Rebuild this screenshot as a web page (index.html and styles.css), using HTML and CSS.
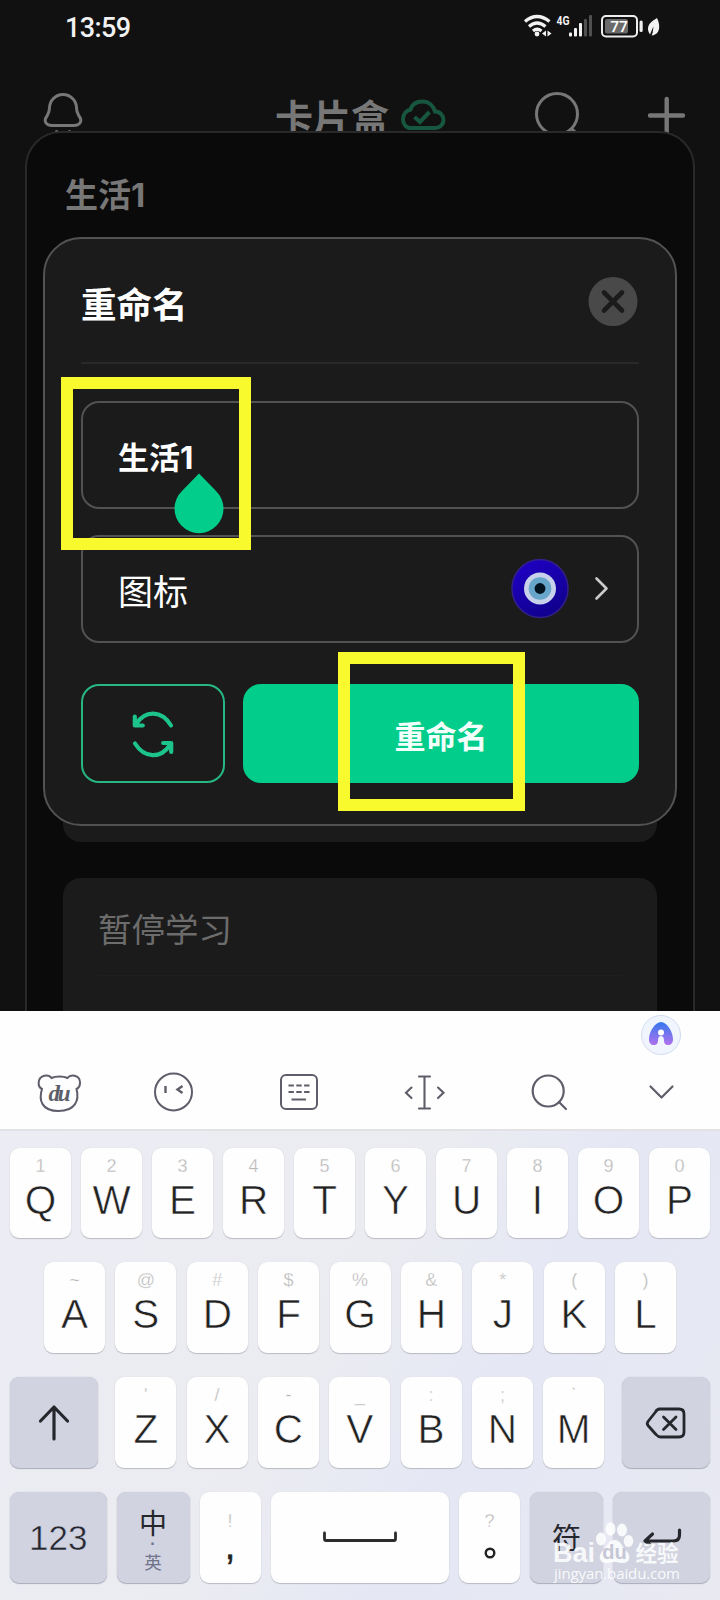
FILE: index.html
```html
<!DOCTYPE html>
<html lang="zh-CN">
<head>
<meta charset="utf-8">
<title>卡片盒</title>
<link rel="stylesheet" href="styles.css">
</head>
<body>
<div class="screen">
  <main class="app">
    <div class="status">
      <span class="time">13:59</span>
      <svg class="status-icons" viewBox="520 10 144 32" width="144" height="32">
        <g fill="none" stroke="#f2f2f2" stroke-width="3.2">
          <path d="M525 21.5Q537 11.500 549.500 21.500M529 26.500Q537 19.500 545.500 26.500M533 31Q537 27.500 541.500 31"/>
        </g>
        <circle cx="537" cy="34" r="2.4" fill="#f2f2f2"/>
        <path d="M546 30.500v6l-4-3zM547.500 30.500v6l4-3z" fill="#f2f2f2"/>
        <text class="net" x="556.500" y="24.500" textLength="13" lengthAdjust="spacingAndGlyphs">4G</text>
        <g fill="#f2f2f2"><rect x="569" y="32.500" width="3" height="4" rx="1"/><rect x="574" y="28" width="3" height="8.500" rx="1"/><rect x="579" y="23" width="3" height="13.500" rx="1"/></g>
        <g fill="#505050"><rect x="584" y="19" width="3" height="17.500" rx="1"/><rect x="589" y="15" width="3" height="21.500" rx="1"/></g>
        <rect x="602" y="16" width="35" height="20.500" rx="4" fill="none" stroke="#eee" stroke-width="2"/>
        <rect x="605" y="19" width="23" height="14.500" rx="2" fill="#6b6b6b"/>
        <text class="pct" x="619" y="32" text-anchor="middle">77</text>
        <rect x="639.500" y="20.500" width="3.200" height="11.500" rx="1.500" fill="#eee"/>
        <path d="M657 18c-5 3-9 6-9 11 0 2 1 4 2 5.500l2.500-6 1-2-.8 6-1 3c5-.5 7.500-4 7.500-9 0-3-1-6-2.200-8.500z" fill="#f2f2f2"/>
      </svg>
    </div>
    <header class="topbar">
      <svg viewBox="43 90 40 46" width="40" height="46" fill="none" stroke="#777" stroke-width="3">
        <path d="M49.500 108a13.500 13.500 0 0 1 27 0c0 4 1 5.500 2.500 8 4 5 1 9.500-5 9.500H52c-6 0-9-4.500-5-9.500 1.500-2.500 2.500-4 2.500-8z"/>
        <path d="M56.500 131.500q6.500 6 13 0" stroke-linecap="round"/>
      </svg>
      <h1 class="app-title">卡片盒</h1>
      <svg class="cloud" viewBox="399 90 48 46" width="48" height="46" fill="none" stroke="#17573f" stroke-width="4">
        <path d="M411 128c-5 0-8-4-8-9 0-5 3.500-8.500 7.500-9.500 1.500-5 6-8 12-8 6.500 0 11 4.500 12.500 10 5 0 8.500 4 8.500 8.500 0 4.500-3.500 8-8 8z"/>
        <path d="M414.500 117l5.500 5 9.500-10"/>
      </svg>
      <svg class="search" viewBox="533 90 48 46" width="48" height="46" fill="none" stroke="#777" stroke-width="3">
        <circle cx="557" cy="114" r="20.500"/><path d="M571 128l7 7"/>
      </svg>
      <svg class="plus" viewBox="646 90 42 46" width="42" height="46" stroke="#777" stroke-width="4.400" stroke-linecap="round">
        <path d="M650 115.500h33M666.700 99v36"/>
      </svg>
    </header>

    <section class="sheet">
      <h2 class="sheet-title">生活<span class="digit">1</span></h2>
      <div class="group group-first"></div>
      <div class="group group-next">
        <p class="group-item">暂停学习</p>
      </div>
    </section>

    <section class="dialog">
      <div class="dialog-head">
        <h2 class="dialog-title">重命名</h2>
        <svg viewBox="0 0 50 50" width="50" height="50">
          <circle cx="25" cy="25.500" r="24.500" fill="#494949"/>
          <path d="M16 16.500l18 18M34 16.500L16 34.500" stroke="#1b1b1b" stroke-width="4.600" stroke-linecap="round"/>
        </svg>
      </div>
      <div class="field">
        <span class="field-value">生活<span class="digit">1</span></span>
        <svg class="handle" viewBox="0 0 50 60" width="50" height="60"><path d="M25 .5L42 18A24.500 24.500 0 1 1 8 18z" fill="#03cd8a"/></svg>
      </div>
      <div class="field icon-field">
        <span class="field-label">图标</span>
        <svg viewBox="0 0 60 60" width="60" height="60">
          <defs><linearGradient id="eye" x1="0" y1="0" x2=".5" y2="1"><stop offset="0" stop-color="#2000ca"/><stop offset="1" stop-color="#11008f"/></linearGradient></defs>
          <ellipse cx="30" cy="29.500" rx="28" ry="29" fill="url(#eye)" stroke="#342184" stroke-width="1.500"/>
          <circle cx="30" cy="29.500" r="16" fill="#c7d1ea"/><circle cx="30" cy="29.500" r="11.300" fill="#67a5ca"/><circle cx="30" cy="29.500" r="5.400" fill="#02131f"/>
        </svg>
        <svg class="chev" viewBox="0 0 16 26" width="16" height="26"><path d="M2.500 2.500l10 10-10 10" fill="none" stroke="#ccc" stroke-width="2.600" stroke-linecap="round" stroke-linejoin="round"/></svg>
      </div>
      <div class="actions">
        <button class="btn btn-outline">
          <svg viewBox="130 708 46 50" width="46" height="50" fill="none" stroke="#1cc48b" stroke-width="4.200" stroke-linecap="round" stroke-linejoin="round">
            <path d="M171 724.500C161.500 709 145.500 709 136 723M134.800 715.500v9h8"/>
            <path d="M135 742.500C144.500 757.500 160.500 758 170 744M171.200 751v-9h-8"/>
          </svg>
        </button>
        <button class="btn btn-primary">重命名</button>
      </div>
    </section>
    <div class="mark mark-input"></div>
    <div class="mark mark-submit"></div>
  </main>

  <section class="ime">
    <div class="candidates">
      <svg viewBox="0 0 42 42" width="42" height="42">
        <defs><linearGradient id="ai" x1="0" y1="0" x2="0" y2="1"><stop offset="0" stop-color="#3478ee"/><stop offset="1" stop-color="#b071ee"/></linearGradient></defs>
        <circle cx="21" cy="21" r="19.500" fill="#f0f4fd" stroke="#d3dcf0" stroke-width="1"/>
        <path d="M21 8c-6 0-12 10-12 17 0 4 2 6 5 6 3 0 4-2 4-4.500 0-3 1-4.500 3-4.500s3 1.500 3 4.500c0 2.500 1 4.500 4 4.500 3 0 5-2 5-6 0-7-6-17-12-17z" fill="url(#ai)"/>
        <circle cx="21" cy="18.500" r="3" fill="#fff"/>
      </svg>
    </div>
    <div class="tools">
      <svg class="tool-home" viewBox="36 1070 46 46" width="46" height="46" fill="none" stroke="#5d5e69" stroke-width="2">
        <path d="M51.500 1078c4-2 12-2 16 0 3-4 12-3.500 12.500 4 .2 3.500-1.500 6-3.500 7 3 11-1 22-18 22s-20-11-16.500-22c-2-1-3.700-3.500-3.300-7 .8-7.500 10-8 12.800-4z"/>
        <text class="du" x="59.500" y="1101" text-anchor="middle" textLength="22">du</text>
      </svg>
      <svg class="tool-emoji" viewBox="152 1070 42 46" width="42" height="46" fill="none" stroke="#5d5e69" stroke-width="2">
        <circle cx="173.500" cy="1092" r="18.500"/><path d="M165.500 1086v7M182.500 1086l-5 3.500 5 3.500" stroke-width="2.400"/>
      </svg>
      <svg class="tool-layout" viewBox="278 1070 42 46" width="42" height="46" fill="none" stroke="#5d5e69" stroke-width="2">
        <rect x="281" y="1075" width="36" height="34" rx="5"/><path d="M288.500 1085.500h21M288.500 1092h21" stroke-dasharray="5.400 2.400"/><path d="M291.500 1099.500h14.500"/>
      </svg>
      <svg class="tool-cursor" viewBox="402 1070 46 46" width="46" height="46" fill="none" stroke="#5d5e69" stroke-width="2.100" stroke-linecap="round">
        <path d="M419 1076.500h11M419 1108.500h11M424.500 1077v31M411.500 1087.500l-5.500 5.300 5.500 5.300M438 1087.500l5.500 5.300-5.500 5.300"/>
      </svg>
      <svg class="tool-search" viewBox="528 1070 42 46" width="42" height="46" fill="none" stroke="#5d5e69" stroke-width="2.200" stroke-linecap="round">
        <circle cx="548.200" cy="1091" r="15.500"/><path d="M559 1102l7 7"/>
      </svg>
      <svg viewBox="646 1070 30 46" width="30" height="46" fill="none" stroke="#5d5e69" stroke-width="2.200" stroke-linecap="round" stroke-linejoin="round">
        <path d="M650.500 1086.500l11 11 11-11"/>
      </svg>
    </div>

    <div class="keys">
      <div class="row row-1">
        <div class="key"><i>1</i><b>Q</b></div><div class="key"><i>2</i><b>W</b></div><div class="key"><i>3</i><b>E</b></div><div class="key"><i>4</i><b>R</b></div><div class="key"><i>5</i><b>T</b></div><div class="key"><i>6</i><b>Y</b></div><div class="key"><i>7</i><b>U</b></div><div class="key"><i>8</i><b>I</b></div><div class="key"><i>9</i><b>O</b></div><div class="key"><i>0</i><b>P</b></div>
      </div>
      <div class="row row-2">
        <div class="key"><i>~</i><b>A</b></div><div class="key"><i>@</i><b>S</b></div><div class="key"><i>#</i><b>D</b></div><div class="key"><i>$</i><b>F</b></div><div class="key"><i>%</i><b>G</b></div><div class="key"><i>&amp;</i><b>H</b></div><div class="key"><i>*</i><b>J</b></div><div class="key"><i>(</i><b>K</b></div><div class="key"><i>)</i><b>L</b></div>
      </div>
      <div class="row row-3">
        <div class="key fn wide">
          <svg viewBox="0 0 34 38" width="34" height="38" fill="none" stroke="#26272d" stroke-width="3.200" stroke-linecap="round" stroke-linejoin="round"><path d="M17 35V3M3.500 17L17 3l13.500 14"/></svg>
        </div>
        <div class="letters">
          <div class="key"><i>'</i><b>Z</b></div><div class="key"><i>/</i><b>X</b></div><div class="key"><i>-</i><b>C</b></div><div class="key"><i>_</i><b>V</b></div><div class="key"><i>:</i><b>B</b></div><div class="key"><i>;</i><b>N</b></div><div class="key"><i>ˋ</i><b>M</b></div>
        </div>
        <div class="key fn wide">
          <svg viewBox="0 0 42 32" width="42" height="32" fill="none" stroke="#26272d" stroke-width="2.800" stroke-linecap="round" stroke-linejoin="round"><path d="M14 2h20q5 0 5 5v18q0 5-5 5H16q-3 0-5-2.500L3 18.500q-1.500-2 0-4L10.500 5Q12 2 15 2M18.500 10l12.500 12.500M31 10L18.500 22.500"/></svg>
        </div>
      </div>
      <div class="row row-4">
        <div class="key fn num">123</div>
        <div class="key fn lang"><span>中</span><em>·</em><small>英</small></div>
        <div class="key punct"><i>!</i><b>,</b></div>
        <div class="key space"><svg viewBox="0 0 76 12" width="76" height="12" fill="none" stroke="#2b2c2e" stroke-width="2.800" stroke-linecap="round" stroke-linejoin="round"><path d="M2.500 2v6q0 1.500 1.500 1.500h68q1.500 0 1.500-1.500V2"/></svg></div>
        <div class="key punct"><i>?</i><svg viewBox="0 0 12 12" width="12" height="12"><circle cx="6" cy="6" r="4.300" fill="none" stroke="#222" stroke-width="2.400"/></svg></div>
        <div class="key fn sym">符</div>
        <div class="key fn enter"><svg viewBox="0 0 40 20" width="40" height="20" fill="none" stroke="#26272d" stroke-width="3.200" stroke-linecap="round" stroke-linejoin="round"><path d="M37.500 3v5q0 6-6 6H3M10.500 7L3 14l5 3.500"/></svg></div>
      </div>
    </div>
  </section>

  <div class="watermark">
    <svg viewBox="552 1518 130 48" width="130" height="48">
      <g fill="#fff" fill-opacity=".85">
        <ellipse cx="601" cy="1539" rx="5" ry="6.500"/><ellipse cx="610.500" cy="1529" rx="5" ry="6.700"/><ellipse cx="622" cy="1530" rx="5" ry="6.500"/><ellipse cx="628.500" cy="1541" rx="4.800" ry="6"/>
        <path d="M614.500 1540c6 0 7 6 11 10 6 5 5 13-3 13-5 0-5-1-8-1s-4 1-8 1c-8 0-9-8-3-13 4-4 5-10 11-10z"/>
        <text class="wm-bai" x="553" y="1562" textLength="42" lengthAdjust="spacingAndGlyphs">Bai</text>
        <text class="wm-cn" x="635.500" y="1561" textLength="43">经验</text>
      </g>
      <text class="wm-du" x="614.500" y="1559" text-anchor="middle">du</text>
    </svg>
    <svg viewBox="552 1566 130 22" width="130" height="22"><text class="wm-url" x="554" y="1579" textLength="126">jingyan.baidu.com</text></svg>
  </div>
</div>
</body>
</html>
```
FILE: styles.css
```css
* { box-sizing: border-box; }

body {
  margin: 0;
  background: #111;
  font-family: "Liberation Sans", "Noto Sans CJK SC", sans-serif;
}

h1, h2, p { margin: 0; }
svg { display: block; flex: none; overflow: visible; }

.screen {
  position: relative;
  width: 720px;
  height: 1600px;
  overflow: hidden;
}

/* App behind the keyboard */
.app {
  position: relative;
  height: 1011px;
  overflow: hidden;
  background: #111;
}

.status {
  display: flex;
  justify-content: space-between;
  height: 90px;
  padding: 10px 56px 0 65px;
}

.time {
  color: #f2f2f2;
  font: 500 27px/36px Roboto, sans-serif;
  letter-spacing: -0.6px;
}

.net { fill: #f2f2f2; font: 700 13px Roboto, sans-serif; }
.pct { fill: #fff; font: 500 15.500px Roboto, sans-serif; }

.topbar {
  display: flex;
  align-items: flex-start;
  padding-left: 43px;
}

.app-title {
  width: 114px;
  margin-left: 192px;
  padding-top: 3px;
  color: #777;
  font: 700 38px/46px "Noto Sans CJK SC", sans-serif;
  white-space: nowrap;
}

.cloud { margin-left: 10px; }
.search { margin-left: 86px; }
.plus { margin-left: 65px; }

/* Sheet covering the lower part of the header */
.sheet {
  position: absolute;
  left: 25px;
  top: 131px;
  width: 670px;
  height: 1000px;
  padding: 0 36px;
  border: 2px solid #292929;
  border-radius: 36px;
  background: #0a0a0a;
}

.sheet-title {
  padding: 35px 0 0 2px;
  height: 104px;
  color: #777;
  font: 700 33px/50px "Noto Sans CJK SC", sans-serif;
}

.digit { font-family: Inter, sans-serif; line-height: 1; }

.group { border-radius: 18px; background: #1b1b1b; }
.group-first { height: 605px; }
.group-next { height: 300px; margin-top: 36px; padding: 25px 35px; }

.group-item {
  height: 73px;
  border-bottom: 1px solid #202020;
  color: #6c6c6c;
  font: 400 33.500px/50px "Noto Sans CJK SC", sans-serif;
}

/* Rename dialog */
.dialog {
  position: absolute;
  left: 43px;
  top: 237px;
  width: 634px;
  height: 589px;
  padding: 0 36px;
  border: 2px solid #525252;
  border-radius: 38px;
  background: #1b1b1b;
}

.dialog-head {
  display: flex;
  align-items: center;
  justify-content: space-between;
  height: 125px;
  padding-right: 1px;
  border-bottom: 2px solid #292929;
}

.dialog-title {
  padding-top: 4px;
  color: #fff;
  font: 700 35.500px/50px "Noto Sans CJK SC", sans-serif;
}

.field {
  position: relative;
  display: flex;
  align-items: center;
  height: 108px;
  margin-top: 37px;
  padding-left: 35px;
  border: 2px solid #525252;
  border-radius: 18px;
  color: #fff;
}

.icon-field { margin-top: 26px; padding-right: 27px; }
.field-value { font: 700 31px/46px "Noto Sans CJK SC", sans-serif; padding-top: 2px; }
.field-label { font: 400 35px/50px "Noto Sans CJK SC", sans-serif; margin-right: auto; padding-top: 2px; }
.chev { margin-left: 24px; }

.handle {
  position: absolute;
  left: 90.500px;
  top: 70px;
}

.actions {
  display: flex;
  gap: 18px;
  height: 99px;
  margin-top: 41px;
}

.btn {
  display: flex;
  align-items: center;
  justify-content: center;
  padding: 0;
  border: 0;
  border-radius: 18px;
}

.btn-outline { width: 144px; border: 2px solid #27b783; background: none; }

.btn-primary {
  flex: 1;
  background: #03cd8a;
  color: #f2fffb;
  font: 700 31px/46px "Noto Sans CJK SC", sans-serif;
  padding-top: 2px;
}

/* Highlight frames drawn over the dialog */
.mark { position: absolute; border: 12px solid #f8fa2e; }
.mark-input { left: 61px; top: 377px; width: 189.500px; height: 173px; }
.mark-submit { left: 338px; top: 652px; width: 187px; height: 158.500px; }

/* Keyboard */
.ime { height: 589px; background: #fefefe; }

.candidates {
  display: flex;
  justify-content: flex-end;
  height: 59px;
  padding: 3px 38px 0 0;
}

.tools {
  display: flex;
  height: 59px;
  padding-left: 36px;
}

.tool-home { margin-right: 70px; }
.tool-emoji { margin-right: 84px; }
.tool-layout { margin-right: 82px; }
.tool-cursor { margin-right: 80px; }
.tool-search { margin-right: 76px; }

.du {
  fill: #5d5e69;
  stroke: none;
  font: italic 700 23px "Liberation Serif", serif;
}

.keys {
  display: flex;
  flex-direction: column;
  gap: 24.200px;
  height: 471px;
  padding: 16.500px 10px 0;
  border-top: 2px solid #e2e2e5;
  background: linear-gradient(120deg, #ececf4 0%, #ebecf1 45%, #e5e7f5 65%, #e8e9f1 100%);
}

.row { display: flex; justify-content: space-between; height: 90.700px; }
.row-2 { padding: 0 34px; }
.row-3 { padding-right: .5px; }
.letters { display: flex; justify-content: space-between; width: 489px; }

.key {
  display: flex;
  flex-direction: column;
  align-items: center;
  width: 61px;
  padding-top: 8px;
  border-radius: 9px;
  background: #fefefe;
  box-shadow: 0 1px 1px #b9bac2, 0 0 1px #d0d1d8;
}

.key i { height: 20px; color: #b8b8b8; font: 400 18px/20px "Liberation Sans", sans-serif; -webkit-text-stroke: .3px #fefefe; }
.key b { margin-top: 4px; color: #222; font: 400 40.500px/40px "Liberation Sans", sans-serif; -webkit-text-stroke: .6px #fefefe; }

.fn {
  justify-content: center;
  padding: 0;
  background: #d1d3e0;
  color: #26272d;
  box-shadow: 0 1px 1px #a9abb8, 0 0 1px #b4b6c4;
}

.wide { width: 88px; }
.num { width: 96.500px; padding-top: 2px; font-size: 35px; -webkit-text-stroke: .5px #d1d3e0; }
.lang { justify-content: flex-start; width: 73px; padding-top: 13px; font-family: "Noto Sans CJK SC", sans-serif; }
.lang span { font-size: 28px; line-height: 34px; }
.lang em { font: 700 16px/10px "Liberation Sans", sans-serif; color: #70748b; }
.lang small { font-size: 17.500px; line-height: 25px; color: #70748b; }
.punct { padding-top: 19px; }
.punct b { margin-top: 1px; line-height: 28px; font-size: 38px; -webkit-text-stroke: .5px #222; }
.punct svg { margin-top: 16px; }
.space { width: 178.500px; justify-content: center; padding: 0; }
.sym { width: 73px; padding-bottom: 3px; font: 400 29px/40px "Noto Sans CJK SC", sans-serif; }
.enter { width: 97px; }

/* Site watermark over the keyboard corner */
.watermark { position: absolute; left: 552px; top: 1518px; }
.wm-bai { font: 700 28px "Liberation Sans", sans-serif; }
.wm-cn { font: 700 21.500px "Noto Sans CJK SC", sans-serif; }
.wm-du { fill: #c5c7d5; font: 700 20px "Liberation Sans", sans-serif; }
.wm-url { fill: #fff; fill-opacity: .9; font: 400 15px "Open Sans", sans-serif; }
```
